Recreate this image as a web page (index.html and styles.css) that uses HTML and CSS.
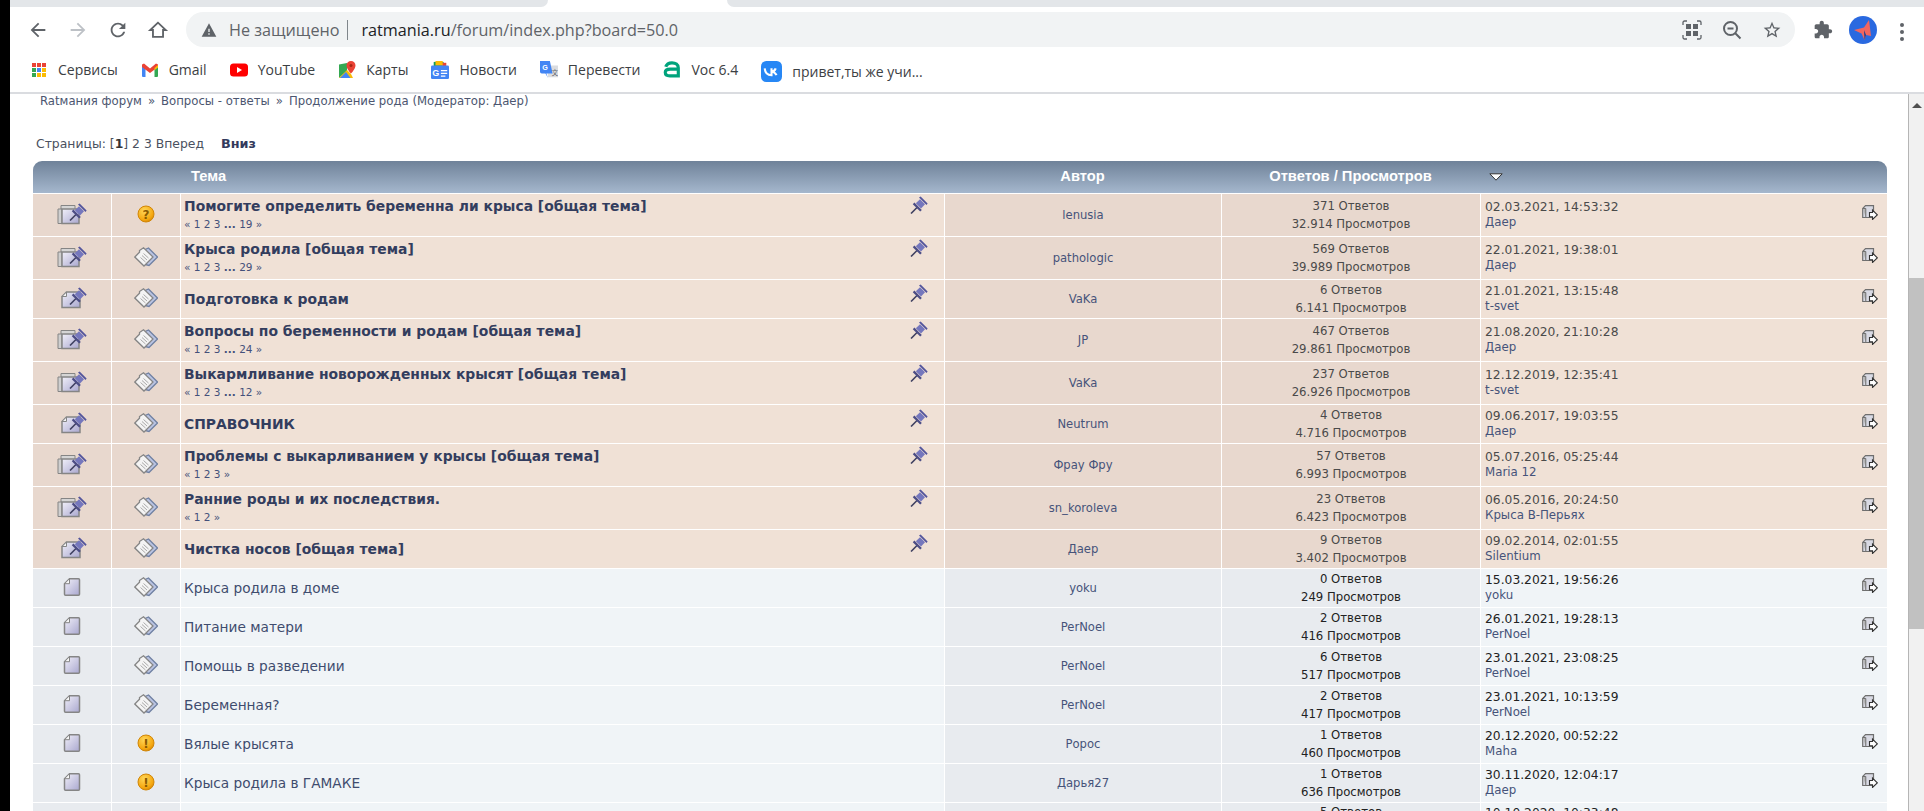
FILE: index.html
```html
<!DOCTYPE html>
<html lang="ru">
<head>
<meta charset="utf-8">
<title>Продолжение рода</title>
<link rel="stylesheet" href="styles.css">
</head>
<body>
<svg class="defs" aria-hidden="true">
  <defs>
    <linearGradient id="paper" x1="0" y1="0" x2="1" y2="1"><stop offset="0" stop-color="#f1f0f9"/><stop offset="1" stop-color="#a9a7cf"/></linearGradient>
    <radialGradient id="amber" cx=".4" cy=".3" r=".8"><stop offset="0" stop-color="#ffd75a"/><stop offset=".7" stop-color="#f5a70f"/><stop offset="1" stop-color="#c97a05"/></radialGradient>
    <symbol id="pinhead" viewBox="0 0 18 18">
      <path d="M1 17.500 7.500 11" stroke="#3f4060" stroke-width="1.600"/>
      <path d="M2.800 8.200 4.400 6.600 11.800 14l-1.600 1.600z" fill="#4c4d86"/>
      <path d="M5.800 7.200 10 3.200 15 8.200 11 12.400z" fill="#7577bd"/>
      <path d="M9 1.500 10.600.4 17.600 7.400 16.500 9z" fill="#53559c"/>
    </symbol>
    <symbol id="doc" viewBox="0 0 30 22">
      <path d="M12.500 2.700H21.500a1 1 0 0 1 1 1v14.600a1 1 0 0 1-1 1H8.500a1 1 0 0 1-1-1V7.700z" fill="url(#paper)" stroke="#858585" stroke-width="1.500"/>
      <path d="M12.500 2.700V7.700H7.500z" fill="#f7f7f7" stroke="#858585"/>
    </symbol>
    <symbol id="docpin" viewBox="0 0 30 22">
      <path d="M9.500 5H23v15.500H5V9.500z" fill="url(#paper)" stroke="#858585" stroke-width="1.500"/>
      <path d="M9.500 5v4.500H5z" fill="#f4f4f4" stroke="#858585"/>
      <use href="#pinhead" x="12" y="0" width="18" height="18"/>
    </symbol>
    <symbol id="hotpin" viewBox="0 0 30 22">
      <path d="M4 2.500H18V7H4z" fill="#d5d5d5" stroke="#858585"/>
      <path d="M1 6H5V20.500H1z" fill="#cfcfcf" stroke="#858585"/>
      <path d="M5 6H22V20.500H5z" fill="url(#paper)" stroke="#858585" stroke-width="1.500"/>
      <use href="#pinhead" x="12" y="0" width="18" height="18"/>
    </symbol>
    <symbol id="topic" viewBox="0 0 24 20">
      <path d="M9 3.500 14.500 1 23.500 10 15 18.500 9 17z" fill="#b9c3e2" stroke="#6f80a2" stroke-width="1.300"/>
      <path d="M.8 10 5.500 5.300 5.500 3.500 9.500 .8 19 10 10 19z" fill="#f4f4f4" stroke="#858585" stroke-width="1.300"/>
      <path d="M8 8.500l5 4.500M6.500 10.500l5 4.500M9.500 6.500l5 4.500" stroke="#aaa" fill="none"/>
    </symbol>
    <symbol id="ask" viewBox="0 0 18 18">
      <circle cx="9" cy="9" r="8" fill="url(#amber)" stroke="#d18607"/>
      <text x="9" y="13.500" class="badge-mark">?</text>
    </symbol>
    <symbol id="warn" viewBox="0 0 18 18">
      <circle cx="9" cy="9" r="8" fill="url(#amber)" stroke="#d18607"/>
      <text x="9" y="13.500" class="badge-mark">!</text>
    </symbol>
    <symbol id="lastpost" viewBox="0 0 16 15">
      <path d="M3.500 .7H11.500V12.500H.7V3.500z" fill="#d9dae4" stroke="#6f6f6f" stroke-width="1.200"/>
      <path d="M.7 3.500H3.800V12.500" fill="#b5b5b5" stroke="#6f6f6f"/>
      <path d="M7.500 7.500h3V5L15.300 9.800 10.500 14.500V11.800h-3z" fill="#fff" stroke="#333" stroke-width="1.100"/>
    </symbol>
  </defs>
</svg>

<div class="edge"></div>
<div class="window">
  <div class="tabstrip">
    <div class="tab-rest tab-left"></div>
    <div class="tab-active"></div>
    <div class="tab-rest tab-right"></div>
  </div>

  <div class="toolbar">
    <svg class="nav" viewBox="0 0 24 24"><path class="ico" d="M20 11H7.830l5.590-5.590L12 4l-8 8 8 8 1.410-1.410L7.830 13H20z"/></svg>
    <svg class="nav" viewBox="0 0 24 24"><path class="ico-off" d="M12 4l-1.410 1.410L16.170 11H4v2h12.170l-5.580 5.590L12 20l8-8z"/></svg>
    <svg class="nav" viewBox="0 0 24 24"><path class="ico" d="M17.650 6.350A7.958 7.958 0 0 0 12 4c-4.420 0-7.990 3.580-7.990 8s3.570 8 7.990 8c3.730 0 6.840-2.550 7.730-6h-2.080A5.990 5.990 0 0 1 12 18c-3.310 0-6-2.690-6-6s2.690-6 6-6c1.660 0 3.140.690 4.220 1.780L13 11h7V4z"/></svg>
    <svg class="nav" viewBox="0 0 24 24"><path class="ico-line" d="M12 4 3.500 12H6.500v7.500h11V12h3z"/></svg>
    <div class="omnibox">
      <svg class="warn-tri" viewBox="0 0 24 24"><path class="ico" d="M1 22h22L12 2zM13 19h-2v-2h2zM13 15h-2v-5h2z"/></svg>
      <span class="insecure">Не защищено</span>
      <span class="sep"></span>
      <span class="url"><span class="host">ratmania.ru</span>/forum/index.php?board=50.0</span>
      <span class="omni-tools">
        <svg class="tool" viewBox="0 0 20 20"><path class="ico-thin" d="M1 5V2.500A1.500 1.500 0 0 1 2.500 1H5M15 1h2.500A1.500 1.500 0 0 1 19 2.500V5M19 15v2.500a1.500 1.500 0 0 1-1.500 1.500H15M5 19H2.500A1.500 1.500 0 0 1 1 17.500V15"/><path class="ico" d="M4 4h5v5H4zM11 4h5v5h-5zM4 11h5v5H4zM11 11h5v5h-5z"/></svg>
        <svg class="tool" viewBox="0 0 20 20"><circle class="ico-line" cx="8.500" cy="8.500" r="6.500"/><path class="ico-line" d="M5.500 8.500h6M13.300 13.300 18.500 18.500"/></svg>
        <svg class="tool" viewBox="0 0 24 24"><path class="ico" d="M22 9.240l-7.190-.62L12 2 9.190 8.630 2 9.240l5.460 4.730L5.820 21 12 17.270 18.180 21l-1.630-7.030zM12 15.400l-3.760 2.270 1-4.280-3.320-2.880 4.380-.38L12 6.100l1.710 4.040 4.380.38-3.320 2.880 1 4.280z"/></svg>
      </span>
    </div>
    <svg class="puzzle" viewBox="0 0 24 24"><path class="ico" d="M20.500 11H19V7c0-1.100-.9-2-2-2h-4V3.500C13 2.120 11.880 1 10.500 1S8 2.120 8 3.500V5H4c-1.100 0-1.990.9-1.990 2v3.800H3.500c1.490 0 2.700 1.210 2.700 2.700s-1.210 2.700-2.700 2.700H2V20c0 1.100.9 2 2 2h3.800v-1.500c0-1.490 1.210-2.700 2.700-2.700 1.490 0 2.700 1.210 2.700 2.700V22H17c1.100 0 2-.9 2-2v-4h1.500c1.380 0 2.500-1.120 2.500-2.500S21.880 11 20.500 11z"/></svg>
    <svg class="avatar" viewBox="0 0 28 28">
      <circle cx="14" cy="14" r="14" fill="#2a69e0"/>
      <path d="M20 4 15 11.500 5 14l7.500 3.500L15.500 24 17 19l5 1z" fill="#f2665f"/>
      <path d="M15 14 15.500 24 17 19z" fill="#1f3f8f"/>
    </svg>
    <span class="dots"><i></i><i></i><i></i></span>
  </div>

  <div class="bookmarks">
    <a class="bm">
      <svg class="bm-ico" viewBox="0 0 18 18">
        <path fill="#ea4335" d="M2 2h4v4H2zM7 2h4v4H7zM12 2h4v4h-4z"/>
        <path fill="#34a853" d="M2 7h4v4H2z"/><path fill="#4285f4" d="M7 7h4v4H7z"/><path fill="#fbbc05" d="M12 7h4v4h-4z"/>
        <path fill="#34a853" d="M2 12h4v4H2z"/><path fill="#fbbc05" d="M7 12h4v4H7zM12 12h4v4h-4z"/>
      </svg>Сервисы</a>
    <a class="bm">
      <svg class="bm-ico" viewBox="0 0 18 18">
        <path fill="#4285f4" d="M1 4.500h3.500V16H2a1 1 0 0 1-1-1z"/><path fill="#34a853" d="M13.500 4.500H17V15a1 1 0 0 1-1 1h-2.500z"/>
        <path fill="#ea4335" d="M1 3.500 3 2.500 9 7.500l6-5 2 1V6L9 12 1 6z"/><path fill="#fbbc05" d="M13.500 7 17 4v2.500l-3.500 2.700z"/>
      </svg>Gmail</a>
    <a class="bm">
      <svg class="bm-ico" viewBox="0 0 18 18"><rect y="2.500" width="18" height="13" rx="3.500" fill="#f00"/><path fill="#fff" d="M7 6v6l5-3z"/></svg>YouTube</a>
    <a class="bm">
      <svg class="bm-ico" viewBox="0 0 18 18">
        <path fill="#34a853" d="M1 3.500 9 2v8L1 17z"/><path fill="#fbbc05" d="M1 17 9 9l4 4 2 4z"/><path fill="#4285f4" d="M8 11l4.500 6H2z"/>
        <path fill="#ea4335" d="M13 0a4.500 4.500 0 0 0-4.500 4.500C8.500 8 13 12.500 13 12.500S17.500 8 17.500 4.500A4.500 4.500 0 0 0 13 0z"/><circle cx="13" cy="4.500" r="1.500" fill="#a52714"/>
      </svg>Карты</a>
    <a class="bm">
      <svg class="bm-ico" viewBox="0 0 20 20">
        <path fill="#0f9d58" d="M3 1h11v6H3z"/><path fill="#ea4335" d="M12 2h5v5h-5z"/><path fill="#fbbc05" d="M5 0h8v5H5z"/>
        <rect x="0" y="5" width="20" height="15" rx="1.500" fill="#4285f4"/>
        <text x="1.500" y="16.500" class="news-mark">G</text><path fill="#fff" d="M11 10h7v1.500h-7zM11 13h7v1.500h-7zM11 16h5v1.500h-5z"/>
      </svg>Новости</a>
    <a class="bm">
      <svg class="bm-ico" viewBox="0 0 20 20">
        <path fill="#dadce0" d="M8 5h12v13H9z"/>
        <path fill="#4285f4" d="M0 0h11l3 14H7l2 5-3-5H2a2 2 0 0 1-2-2z"/>
        <text x="2.500" y="10" class="gt-mark">G</text><text x="13" y="16" class="gt-side">文</text>
      </svg>Перевести</a>
    <a class="bm">
      <svg class="bm-ico" viewBox="0 0 20 20"><path fill="none" stroke="#00a37c" stroke-width="3.500" d="M3 6.500C4 3.500 6 2 10 2s7 2 7 5.500V16.500H7.500C4.500 16.500 2.500 15 2.500 12.500S5 9 8 9h8"/></svg>Voc 6.4</a>
    <a class="bm">
      <svg class="bm-ico bm-vk" viewBox="0 0 20 20"><rect width="20" height="20" rx="5" fill="#2787f5"/><path fill="none" stroke="#fff" stroke-width="2" d="M3.500 7c.5 4.500 3 6.500 6.500 6.500V7M10 10c2 0 3.500-1.500 4-3M10 10c2 .3 4 1.800 4.800 3.500"/></svg>привет,ты же учи...</a>
  </div>

  <div class="viewport">
    <main class="page">
      <nav class="crumbs">Ratмания форум<span class="sp">»</span>Вопросы - ответы<span class="sp">»</span>Продолжение рода (Модератор: Даер)</nav>
      <div class="pager">Страницы: [<b>1</b>] 2 3 Вперед <b class="down">Вниз</b></div>

      <table class="topics">
        <colgroup>
          <col class="c-a"><col class="c-b"><col class="c-c"><col class="c-d"><col class="c-e"><col class="c-f">
        </colgroup>
        <thead>
          <tr>
            <th class="h-first"></th>
            <th></th>
            <th class="h-subject">Тема</th>
            <th>Автор</th>
            <th>Ответов / Просмотров</th>
            <th class="h-last"><svg class="sort" viewBox="0 0 14 8"><path d="M.8.800h12.400L7 7.200z" fill="#fff" stroke="#333" stroke-width="1"/></svg></th>
          </tr>
        </thead>
        <tbody>
          <tr class="sticky tall">
            <td class="dim"><svg class="i-state"><use href="#hotpin"/></svg></td>
            <td class="dim"><svg class="i-round"><use href="#ask"/></svg></td>
            <td class="subject"><div class="subj-in"><div><a class="title">Помогите определить беременна ли крыса [общая тема]</a><div class="pp">« 1 2 3 <b>...</b> 19 »</div></div><svg class="i-pin"><use href="#pinhead"/></svg></div></td>
            <td class="dim author">lenusia</td>
            <td class="dim stats">371 Ответов<br>32.914 Просмотров</td>
            <td class="last"><div class="last-in"><div>02.03.2021, 14:53:32<br><a class="who">Даер</a></div><svg class="i-last"><use href="#lastpost"/></svg></div></td>
          </tr>
          <tr class="sticky tall">
            <td class="dim"><svg class="i-state"><use href="#hotpin"/></svg></td>
            <td class="dim"><svg class="i-topic"><use href="#topic"/></svg></td>
            <td class="subject"><div class="subj-in"><div><a class="title">Крыса родила [общая тема]</a><div class="pp">« 1 2 3 <b>...</b> 29 »</div></div><svg class="i-pin"><use href="#pinhead"/></svg></div></td>
            <td class="dim author">pathologic</td>
            <td class="dim stats">569 Ответов<br>39.989 Просмотров</td>
            <td class="last"><div class="last-in"><div>22.01.2021, 19:38:01<br><a class="who">Даер</a></div><svg class="i-last"><use href="#lastpost"/></svg></div></td>
          </tr>
          <tr class="sticky">
            <td class="dim"><svg class="i-state"><use href="#docpin"/></svg></td>
            <td class="dim"><svg class="i-topic"><use href="#topic"/></svg></td>
            <td class="subject"><div class="subj-in"><div><a class="title">Подготовка к родам</a></div><svg class="i-pin"><use href="#pinhead"/></svg></div></td>
            <td class="dim author">VaKa</td>
            <td class="dim stats">6 Ответов<br>6.141 Просмотров</td>
            <td class="last"><div class="last-in"><div>21.01.2021, 13:15:48<br><a class="who">t-svet</a></div><svg class="i-last"><use href="#lastpost"/></svg></div></td>
          </tr>
          <tr class="sticky tall">
            <td class="dim"><svg class="i-state"><use href="#hotpin"/></svg></td>
            <td class="dim"><svg class="i-topic"><use href="#topic"/></svg></td>
            <td class="subject"><div class="subj-in"><div><a class="title">Вопросы по беременности и родам [общая тема]</a><div class="pp">« 1 2 3 <b>...</b> 24 »</div></div><svg class="i-pin"><use href="#pinhead"/></svg></div></td>
            <td class="dim author">JP</td>
            <td class="dim stats">467 Ответов<br>29.861 Просмотров</td>
            <td class="last"><div class="last-in"><div>21.08.2020, 21:10:28<br><a class="who">Даер</a></div><svg class="i-last"><use href="#lastpost"/></svg></div></td>
          </tr>
          <tr class="sticky tall">
            <td class="dim"><svg class="i-state"><use href="#hotpin"/></svg></td>
            <td class="dim"><svg class="i-topic"><use href="#topic"/></svg></td>
            <td class="subject"><div class="subj-in"><div><a class="title">Выкармливание новорожденных крысят [общая тема]</a><div class="pp">« 1 2 3 <b>...</b> 12 »</div></div><svg class="i-pin"><use href="#pinhead"/></svg></div></td>
            <td class="dim author">VaKa</td>
            <td class="dim stats">237 Ответов<br>26.926 Просмотров</td>
            <td class="last"><div class="last-in"><div>12.12.2019, 12:35:41<br><a class="who">t-svet</a></div><svg class="i-last"><use href="#lastpost"/></svg></div></td>
          </tr>
          <tr class="sticky">
            <td class="dim"><svg class="i-state"><use href="#docpin"/></svg></td>
            <td class="dim"><svg class="i-topic"><use href="#topic"/></svg></td>
            <td class="subject"><div class="subj-in"><div><a class="title">СПРАВОЧНИК</a></div><svg class="i-pin"><use href="#pinhead"/></svg></div></td>
            <td class="dim author">Neutrum</td>
            <td class="dim stats">4 Ответов<br>4.716 Просмотров</td>
            <td class="last"><div class="last-in"><div>09.06.2017, 19:03:55<br><a class="who">Даер</a></div><svg class="i-last"><use href="#lastpost"/></svg></div></td>
          </tr>
          <tr class="sticky tall">
            <td class="dim"><svg class="i-state"><use href="#hotpin"/></svg></td>
            <td class="dim"><svg class="i-topic"><use href="#topic"/></svg></td>
            <td class="subject"><div class="subj-in"><div><a class="title">Проблемы с выкарливанием у крысы [общая тема]</a><div class="pp">« 1 2 3 »</div></div><svg class="i-pin"><use href="#pinhead"/></svg></div></td>
            <td class="dim author">Фрау Фру</td>
            <td class="dim stats">57 Ответов<br>6.993 Просмотров</td>
            <td class="last"><div class="last-in"><div>05.07.2016, 05:25:44<br><a class="who">Maria 12</a></div><svg class="i-last"><use href="#lastpost"/></svg></div></td>
          </tr>
          <tr class="sticky tall">
            <td class="dim"><svg class="i-state"><use href="#hotpin"/></svg></td>
            <td class="dim"><svg class="i-topic"><use href="#topic"/></svg></td>
            <td class="subject"><div class="subj-in"><div><a class="title">Ранние роды и их последствия.</a><div class="pp">« 1 2 »</div></div><svg class="i-pin"><use href="#pinhead"/></svg></div></td>
            <td class="dim author">sn_koroleva</td>
            <td class="dim stats">23 Ответов<br>6.423 Просмотров</td>
            <td class="last"><div class="last-in"><div>06.05.2016, 20:24:50<br><a class="who">Крыса В-Перьях</a></div><svg class="i-last"><use href="#lastpost"/></svg></div></td>
          </tr>
          <tr class="sticky">
            <td class="dim"><svg class="i-state"><use href="#docpin"/></svg></td>
            <td class="dim"><svg class="i-topic"><use href="#topic"/></svg></td>
            <td class="subject"><div class="subj-in"><div><a class="title">Чистка носов [общая тема]</a></div><svg class="i-pin"><use href="#pinhead"/></svg></div></td>
            <td class="dim author">Даер</td>
            <td class="dim stats">9 Ответов<br>3.402 Просмотров</td>
            <td class="last"><div class="last-in"><div>09.02.2014, 02:01:55<br><a class="who">Silentium</a></div><svg class="i-last"><use href="#lastpost"/></svg></div></td>
          </tr>
          <tr>
            <td class="dim"><svg class="i-state"><use href="#doc"/></svg></td>
            <td class="dim"><svg class="i-topic"><use href="#topic"/></svg></td>
            <td class="subject"><a class="plain-title">Крыса родила в доме</a></td>
            <td class="dim author">yoku</td>
            <td class="dim stats">0 Ответов<br>249 Просмотров</td>
            <td class="last"><div class="last-in"><div>15.03.2021, 19:56:26<br><a class="who">yoku</a></div><svg class="i-last"><use href="#lastpost"/></svg></div></td>
          </tr>
          <tr>
            <td class="dim"><svg class="i-state"><use href="#doc"/></svg></td>
            <td class="dim"><svg class="i-topic"><use href="#topic"/></svg></td>
            <td class="subject"><a class="plain-title">Питание матери</a></td>
            <td class="dim author">PerNoel</td>
            <td class="dim stats">2 Ответов<br>416 Просмотров</td>
            <td class="last"><div class="last-in"><div>26.01.2021, 19:28:13<br><a class="who">PerNoel</a></div><svg class="i-last"><use href="#lastpost"/></svg></div></td>
          </tr>
          <tr>
            <td class="dim"><svg class="i-state"><use href="#doc"/></svg></td>
            <td class="dim"><svg class="i-topic"><use href="#topic"/></svg></td>
            <td class="subject"><a class="plain-title">Помощь в разведении</a></td>
            <td class="dim author">PerNoel</td>
            <td class="dim stats">6 Ответов<br>517 Просмотров</td>
            <td class="last"><div class="last-in"><div>23.01.2021, 23:08:25<br><a class="who">PerNoel</a></div><svg class="i-last"><use href="#lastpost"/></svg></div></td>
          </tr>
          <tr>
            <td class="dim"><svg class="i-state"><use href="#doc"/></svg></td>
            <td class="dim"><svg class="i-topic"><use href="#topic"/></svg></td>
            <td class="subject"><a class="plain-title">Беременная?</a></td>
            <td class="dim author">PerNoel</td>
            <td class="dim stats">2 Ответов<br>417 Просмотров</td>
            <td class="last"><div class="last-in"><div>23.01.2021, 10:13:59<br><a class="who">PerNoel</a></div><svg class="i-last"><use href="#lastpost"/></svg></div></td>
          </tr>
          <tr>
            <td class="dim"><svg class="i-state"><use href="#doc"/></svg></td>
            <td class="dim"><svg class="i-round"><use href="#warn"/></svg></td>
            <td class="subject"><a class="plain-title">Вялые крысята</a></td>
            <td class="dim author">Ророс</td>
            <td class="dim stats">1 Ответов<br>460 Просмотров</td>
            <td class="last"><div class="last-in"><div>20.12.2020, 00:52:22<br><a class="who">Maha</a></div><svg class="i-last"><use href="#lastpost"/></svg></div></td>
          </tr>
          <tr>
            <td class="dim"><svg class="i-state"><use href="#doc"/></svg></td>
            <td class="dim"><svg class="i-round"><use href="#warn"/></svg></td>
            <td class="subject"><a class="plain-title">Крыса родила в ГАМАКЕ</a></td>
            <td class="dim author">Дарья27</td>
            <td class="dim stats">1 Ответов<br>636 Просмотров</td>
            <td class="last"><div class="last-in"><div>30.11.2020, 12:04:17<br><a class="who">Даер</a></div><svg class="i-last"><use href="#lastpost"/></svg></div></td>
          </tr>
          <tr class="cut">
            <td class="dim"></td>
            <td class="dim"></td>
            <td class="subject"></td>
            <td class="dim"></td>
            <td class="dim stats">5 Ответов</td>
            <td class="last">10.10.2020, 10:33:48</td>
          </tr>
        </tbody>
      </table>
    </main>
    <div class="scrollbar">
      <span class="sb-up"></span>
      <span class="sb-thumb"></span>
    </div>
  </div>
</div>
</body>
</html>
```
FILE: styles.css
```css
* { box-sizing: border-box; }
html, body { margin: 0; height: 811px; overflow: hidden; background: #fff; }
body { display: flex; font-family: "DejaVu Sans", Verdana, sans-serif; }
.defs { width: 0; height: 0; flex: none; overflow: hidden; }
.edge { width: 10px; flex: none; background: #000; }
.window { flex: 1; min-width: 0; display: flex; flex-direction: column; }

/* browser chrome */
.tabstrip { height: 7px; flex: none; display: flex; }
.tab-rest { background: #e3e6e9; }
.tab-left { width: 538px; border-bottom-right-radius: 7px; }
.tab-active { width: 179px; background: #fff; }
.tab-right { flex: 1; border-bottom-left-radius: 7px; }

.toolbar { height: 48px; flex: none; display: flex; align-items: flex-start; padding: 5px 20px 0 17px; font-family: "Open Sans", sans-serif; }
.nav { width: 22px; height: 22px; flex: none; margin: 7px 18px 0 0; }
.nav:nth-of-type(4) { margin-right: 17px; }
.ico { fill: #5f6368; }
.ico-off { fill: #bdc1c6; }
.ico-line { fill: none; stroke: #5f6368; stroke-width: 2; }
.ico-thin { fill: none; stroke: #5f6368; stroke-width: 1.300; }
.omnibox { flex: 1; height: 35px; border-radius: 18px; background: #f1f3f4; display: flex; align-items: center; padding: 0 13px 0 15px; font-size: 16.200px; color: #5f6368; }
.warn-tri { width: 16px; height: 16px; flex: none; margin-right: 12px; }
.insecure { white-space: nowrap; }
.sep { width: 1px; height: 20px; background: #80868b; margin: 0 13px 0 8px; flex: none; }
.url { white-space: nowrap; }
.host { color: #202124; }
.omni-tools { margin-left: auto; display: flex; gap: 20px; }
.tool { width: 20px; height: 20px; display: block; }
.puzzle { width: 20px; height: 20px; flex: none; margin: 8px 0 0 18px; }
.avatar { width: 28px; height: 28px; flex: none; margin: 4px 0 0 16px; }
.dots { width: 4px; flex: none; margin: 11px 0 0 23px; display: flex; flex-direction: column; gap: 3px; }
.dots i { width: 4px; height: 4px; border-radius: 50%; background: #5f6368; }

.bookmarks { height: 39px; flex: none; display: flex; align-items: flex-start; gap: 23px; padding: 6px 0 0 20px; border-bottom: 2px solid #dadce0; font: 14px/18px "Open Sans", sans-serif; color: #3c4043; }
.bm { display: flex; align-items: center; gap: 10px; white-space: nowrap; }
.bm-ico { width: 18px; height: 18px; flex: none; }
.bm-vk { width: 21px; height: 21px; }
.news-mark { font: 700 10px "Liberation Sans", sans-serif; fill: #fff; }
.gt-mark { font: 700 8px "Liberation Sans", sans-serif; fill: #fff; }
.gt-side { font: 7px "Noto Sans CJK SC", sans-serif; fill: #5f6368; }

/* page */
.viewport { flex: 1; min-height: 0; display: flex; }
.page { flex: 1; min-width: 0; padding-left: 23px; overflow: hidden; font-size: 11.700px; color: #444; }
.crumbs { height: 15px; padding-left: 7px; line-height: 15px; color: #4c5670; white-space: nowrap; }
.sp { margin: 0 6px; }
.pager { margin-top: 20px; height: 32px; padding-left: 3px; line-height: 30px; font-size: 12.400px; color: #4a5160; white-space: nowrap; }
.pager b { color: #333; }
.pager .down { margin-left: 13px; font-size: 12.800px; color: #333a5c; }

.topics { width: 1854px; border-collapse: separate; border-spacing: 0; table-layout: fixed; }
.c-a { width: 78px; } .c-b { width: 69px; } .c-c { width: 764px; }
.c-d { width: 277px; } .c-e { width: 259px; } .c-f { width: 407px; }
th { height: 32px; padding: 0 0 2px; background: linear-gradient(#6f8299, #a5b7cd); color: #fff; font: 700 14.700px "Liberation Sans", sans-serif; text-align: center; }
.h-first { border-top-left-radius: 9px; }
.h-last { border-top-right-radius: 9px; text-align: left; padding-left: 9px; }
.h-subject { text-align: left; padding-left: 11px; }
.sort { width: 14px; height: 8px; display: block; margin-top: 1px; }

td { height: 39px; padding: 0; border-top: 1px solid #fff; border-left: 1px solid #fff; background: #f0f4f7; text-align: center; color: #222; }
td:first-child { border-left: 0; }
td.dim { background: #e8ebef; }
.tall td { height: 43px; }
.sticky td { background: #f0e1d6; color: #4a4a4a; }
.sticky td.dim { background: #e8d8ce; }

.i-state { width: 30px; height: 22px; display: block; margin: 0 auto 3px; }
.i-topic { width: 24px; height: 20px; display: block; margin: 0 auto 3px; }
.i-round { width: 18px; height: 18px; display: block; margin: 0 auto 2px; }
.badge-mark { font: 700 12px "DejaVu Sans", sans-serif; fill: #8a5a00; text-anchor: middle; }

td.subject { text-align: left; padding: 0 16px 0 3px; }
.subj-in { display: flex; justify-content: space-between; align-items: center; }
.title { display: block; font-size: 13.900px; font-weight: 700; line-height: 18px; color: #333d5e; }
.pp { font-size: 10.500px; line-height: 18px; color: #44507a; }
.i-pin { width: 18px; height: 18px; flex: none; align-self: flex-start; margin-top: -6px; }
.tall .i-pin { margin-top: -1px; }
.plain-title { font-size: 13.700px; line-height: 18px; color: #3f4c6e; }

td.author, .sticky td.author { color: #46537a; font-size: 11.600px; }
.stats { line-height: 18px; }
td.last { text-align: left; padding: 0 9px 0 4px; line-height: 15px; font-size: 12.300px; }
.last-in { display: flex; justify-content: space-between; align-items: center; }
.who { color: #46537a; font-size: 11.800px; }
.i-last { width: 16px; height: 15px; flex: none; margin-bottom: 5px; }
.cut td { vertical-align: top; }
.cut td.last { padding-top: 3px; }

/* scrollbar */
.scrollbar { width: 16px; flex: none; border-left: 1px solid #b5b5b5; background: #f1f1f1; display: flex; flex-direction: column; align-items: center; }
.sb-up { margin-top: 9px; width: 0; height: 0; border: 5px solid transparent; border-top: 0; border-bottom: 5px solid #505050; }
.sb-thumb { margin-top: 170px; width: 100%; height: 351px; background: #c1c1c1; }
```
